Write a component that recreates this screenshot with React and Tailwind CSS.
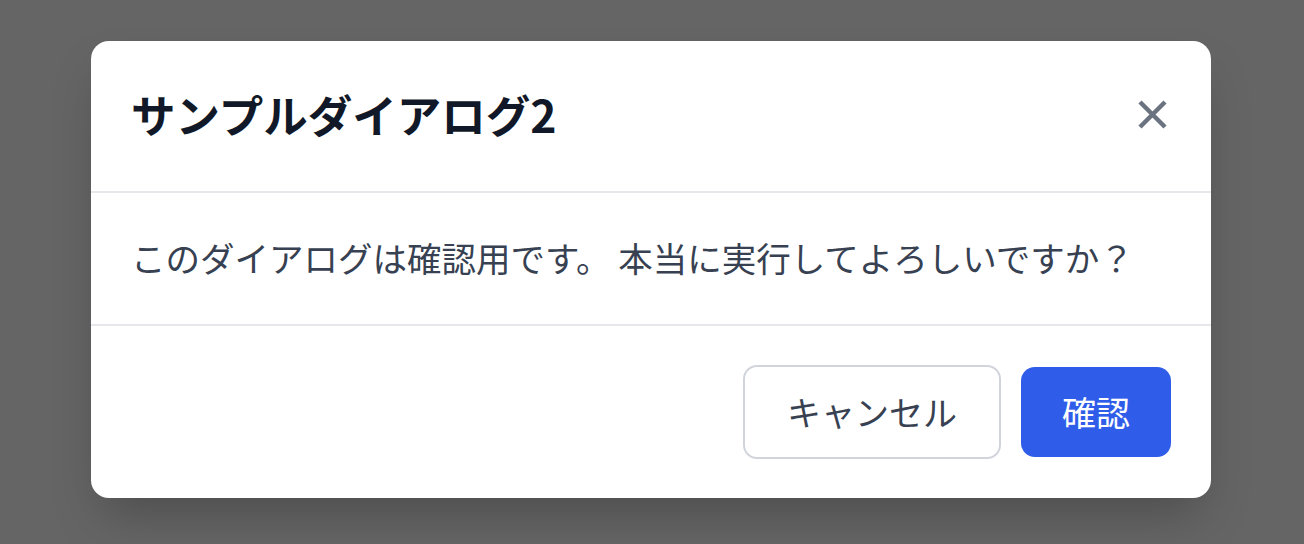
export default function App() {
  return (
    <div
      className="h-[544px] w-full bg-[#656565] flex pl-[91px] pt-[41px]"
      style={{ fontFamily: '"Noto Sans CJK JP", "Noto Sans", sans-serif' }}
    >
      <div className="w-[1120px] h-[457px] bg-white rounded-[18px] shadow-2xl flex flex-col overflow-hidden">
        {/* header */}
        <div className="h-[152px] flex items-center justify-between pl-[40px] pr-[44px] pb-[3px] border-b-2 border-[#e5e7eb]">
          <h2 className="text-[44.5px] font-bold text-[#111827] leading-none">サンプルダイアログ2</h2>
          <button className="text-[#6b7280]" aria-label="close">
            <svg width="29" height="29" viewBox="0 0 29 29" fill="none">
              <path d="M2 2 L27 27 M27 2 L2 27" stroke="currentColor" strokeWidth="4.5" />
            </svg>
          </button>
        </div>

        {/* body */}
        <div className="h-[133px] flex items-center px-[40px] pb-[3px] border-b-2 border-[#e5e7eb]">
          <p className="text-[34.5px] text-[#374151] leading-none">
            このダイアログは確認用です。 本当に実行してよろしいですか？
          </p>
        </div>

        {/* footer */}
        <div className="flex-1 flex items-center justify-end gap-[20px] pr-[40px]">
          <button className="h-[94px] px-[42px] border-2 border-[#d1d5db] rounded-[14px] text-[34px] text-[#374151] bg-white leading-none">
            キャンセル
          </button>
          <button className="h-[90px] px-[41px] rounded-[14px] text-[34px] text-white bg-[#2f5de9] leading-none">
            確認
          </button>
        </div>
      </div>
    </div>
  );
}
